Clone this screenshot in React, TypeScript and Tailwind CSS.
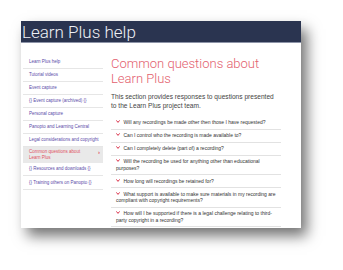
import React from "react";

const side = [
  "Learn Plus help",
  "Tutorial videos",
  "Event capture",
  "{} Event capture (archived) {}",
  "Personal capture",
  "Panopto and Learning Central",
  "Legal considerations and copyright",
];

const faqs = [
  "Will any recordings be made other then those I have requested?",
  "Can I control who the recording is made available to?",
  "Can I completely delete (part of) a recording?",
  "Will the recording be used for anything other than educational purposes?",
  "How long will recordings be retained for?",
  "What support is available to make sure materials in my recording are compliant with copyright requirements?",
  "How will I be supported if there is a legal challenge relating to third-party copyright in a recording?",
];

function Chev() {
  return (
    <svg width="4" height="3" viewBox="0 0 4 3" className="inline-block align-[1px] mr-[3.5px]">
      <path d="M0.4 0.4 L2 2.4 L3.6 0.4" fill="none" stroke="#d9344c" strokeWidth="1" />
    </svg>
  );
}

export default function App() {
  return (
    <div className="w-[343px] h-[270px] bg-white pt-[21px] pl-[21px] overflow-hidden" style={{ fontFamily: "'Liberation Sans', Arial, sans-serif" }}>
      <div className="w-[280px] h-[207px] bg-white shadow-[6px_8px_13px_rgba(0,0,0,0.55)]">
        <div className="h-[22px] bg-[#2a3450] border-b-[1.5px] border-[#8d94a8] overflow-hidden">
          <div className="pl-[1px] text-[17px] leading-[22px] font-light text-[#eef0f5]" style={{ fontFamily: "Roboto, 'Liberation Sans', sans-serif" }}>
            Learn Plus help
          </div>
        </div>
        <div className="flex pt-[12.5px]">
          <div className="ml-[2px] w-[80px] text-[4.5px] text-[#5a4aa8]">
            {side.map((s) => (
              <div key={s} className="pl-[6px] py-[3.25px] leading-[5.5px] border-b-[0.5px] border-[#e6e6e6] whitespace-nowrap">
                {s}
              </div>
            ))}
            <div className="flex bg-[#e9e9e9] pl-[6px] pr-[3px] py-[2px] text-[#e0505f]">
              <div className="w-[64px] leading-[6px]">Common questions about Learn Plus</div>
              <div className="ml-auto leading-[6px] text-[6px] font-bold">›</div>
            </div>
            {["{} Resources and downloads {}", "{} Training others on Panopto {}"].map((s) => (
              <div key={s} className="pl-[6px] py-[3.5px] leading-[5.5px] border-b-[0.5px] border-[#e6e6e6] whitespace-nowrap">
                {s}
              </div>
            ))}
          </div>
          <div className="ml-[8px] w-[170px]">
            <div className="text-[13px] leading-[15px] font-light text-[#e3606e]" style={{ fontFamily: "Roboto, 'Liberation Sans', sans-serif" }}>
              Common questions about Learn Plus
            </div>
            <div className="mt-[6px] text-[6.6px] leading-[9px] text-[#444] whitespace-nowrap">
              This section provides responses to questions presented
              <br />
              to the Learn Plus project team.
            </div>
            <div className="mt-[7px] text-[5px] text-[#333]">
              {faqs.map((f) => (
                <div key={f} className="pl-[5px] pr-[2px] py-[2.75px] leading-[6.5px] border-b-[0.5px] border-[#e2e2e2]">
                  <Chev />
                  {f}
                </div>
              ))}
            </div>
          </div>
        </div>
      </div>
    </div>
  );
}
